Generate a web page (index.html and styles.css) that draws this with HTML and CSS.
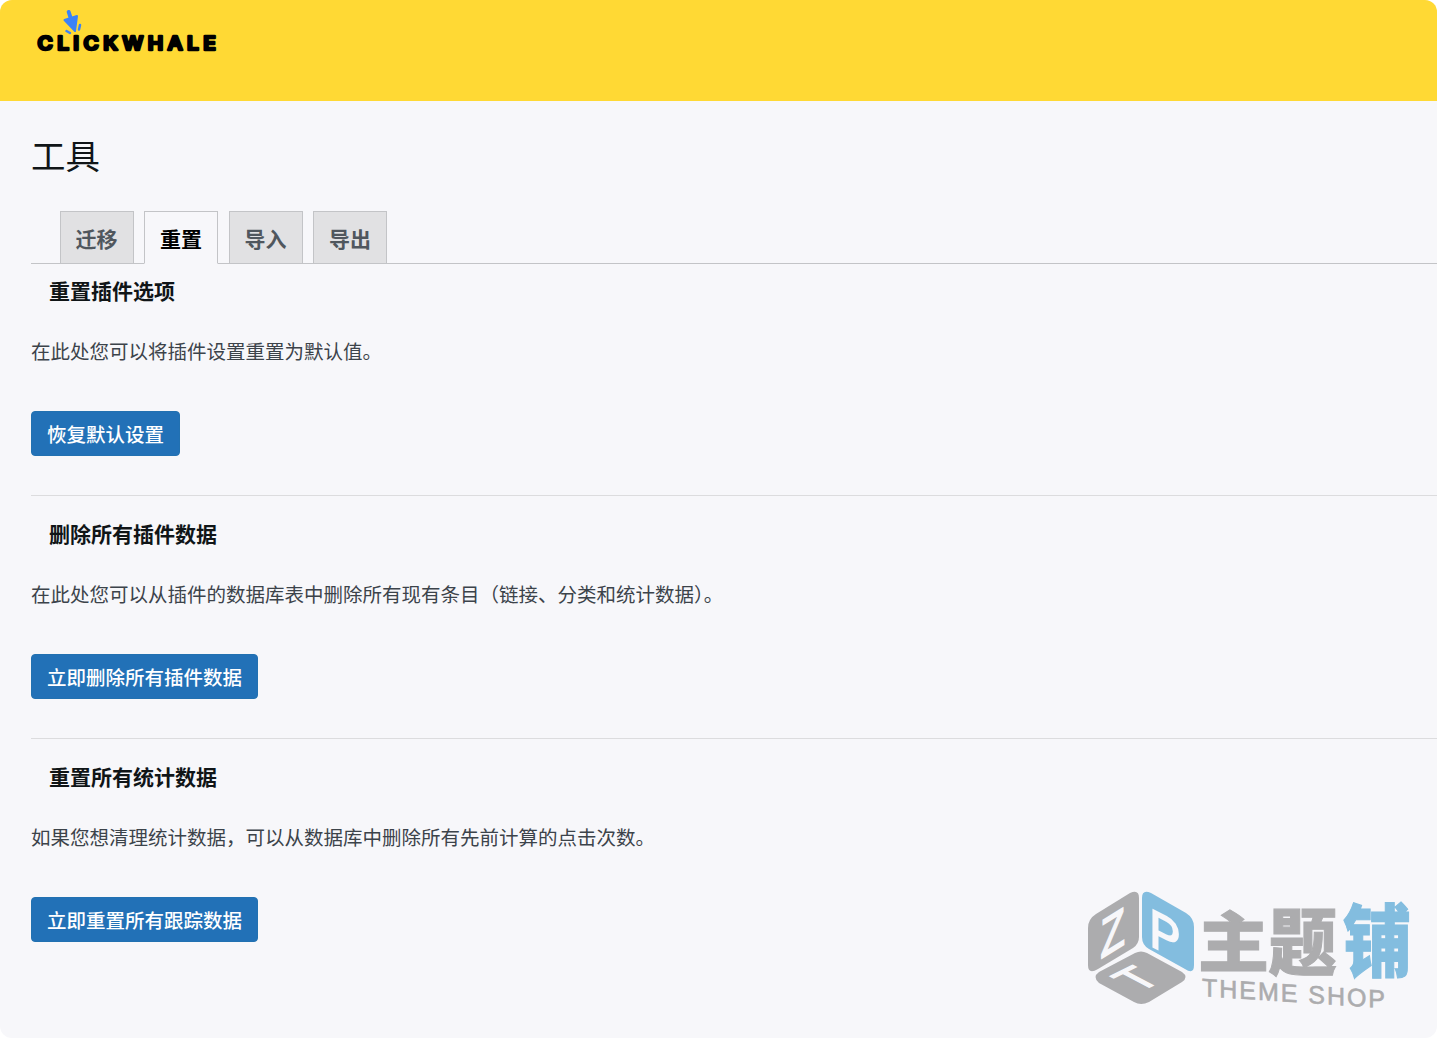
FILE: index.html
```html
<!DOCTYPE html>
<html lang="zh-CN">
<head>
    <meta charset="UTF-8">
    <meta name="viewport" content="width=device-width, initial-scale=1.0">
    <title>工具 - ClickWhale</title>
    <link rel="stylesheet" href="styles.css">
</head>
<body>
    <div class="page">
        <header class="header">
            <svg class="logo" width="190" height="50" viewBox="0 0 190 50" role="img" aria-label="ClickWhale">
                <text class="logo-text" transform="matrix(1.150 0 0 1 3.500 42)" textLength="155">CLICKWHALE</text>
                <g class="logo-cursor">
                    <path class="cursor-head" d="M30.500 12 L43 8 L41 23 Z"/>
                    <path class="cursor-tail" d="M34.700 4 L37 11"/>
                    <path class="cursor-click" d="M32.500 23 L36 25 M46 17 L45 21.500"/>
                </g>
            </svg>
        </header>

        <main class="content">
            <h1>工具</h1>

            <nav class="tabs">
                <a class="tab" href="#">迁移</a>
                <a class="tab active" href="#">重置</a>
                <a class="tab" href="#">导入</a>
                <a class="tab" href="#">导出</a>
            </nav>

            <section class="section">
                <h2>重置插件选项</h2>
                <p>在此处您可以将插件设置重置为默认值。</p>
                <button type="button" class="button">恢复默认设置</button>
            </section>

            <section class="section">
                <h2>删除所有插件数据</h2>
                <p>在此处您可以从插件的数据库表中删除所有现有条目（链接、分类和统计数据）。</p>
                <button type="button" class="button">立即删除所有插件数据</button>
            </section>

            <section class="section">
                <h2>重置所有统计数据</h2>
                <p>如果您想清理统计数据，可以从数据库中删除所有先前计算的点击次数。</p>
                <button type="button" class="button">立即重置所有跟踪数据</button>
            </section>
        </main>

        <!-- Theme Shop mark -->
        <svg class="watermark" width="350" height="150" viewBox="0 -20 350 150" role="img" aria-label="主题铺 THEME SHOP">
            <path class="gray" d="M50 8 Q59 4 59 13 V52 Q59 59 53 63 L18 84 Q8 90 8 80 V43 Q8 34 16 29 Z"/>
            <path class="blue" d="M62 13 Q62 4 71 8 L106 28 Q114 33 114 42 V80 Q114 90 105 84 L69 64 Q62 60 62 52 Z"/>
            <path class="gray" d="M55 68 Q61 65 67 68 L102 87 Q109 92 102 97 L69 117 Q61 121 54 117 L19 98 Q12 92 19 87 Z"/>
            <text class="face" transform="matrix(.93 -.58 0 1.25 20.500 74)">Z</text>
            <text class="face" transform="matrix(1.080 .56 0 1.250 69.500 60)">P</text>
            <text class="face" transform="matrix(.92 -.46 1 .53 59 107.500)">T</text>
            <text class="name gray" transform="matrix(1.060 0 0 .97 118 81)">主</text>
            <text class="name gray" transform="matrix(1.020 0 0 1.080 188.500 84)">题</text>
            <text class="name blue" transform="matrix(1.020 0 0 1.180 263 85.500)">铺</text>
            <text class="sub gray" transform="matrix(1 .066 0 1 122 111)" textLength="183">THEME SHOP</text>
        </svg>
    </div>
</body>
</html>
```

FILE: styles.css
```css
* {
    box-sizing: border-box;
}

body {
    margin: 0;
    background-color: #fff;
    color: #3c434a;
    font-family: "Noto Sans CJK SC", sans-serif;
    font-size: 19.5px;
}

.page {
    position: relative;
    height: 1038px;
    background-color: #f7f7fa;
    border-radius: 12px;
    overflow: hidden;
}

.header {
    height: 101px;
    padding: 8px 34px;
    background-color: #ffd934;
}

.logo {
    display: block;
}

.logo-text {
    font-family: Inter, sans-serif;
    font-size: 18px;
    font-weight: 600;
    fill: #000;
    stroke: #000;
    stroke-width: 2.4;
    stroke-linejoin: round;
}

.cursor-head {
    fill: #3b82f6;
    stroke: #3b82f6;
    stroke-width: 2;
    stroke-linejoin: round;
}

.cursor-tail,
.cursor-click {
    fill: none;
    stroke: #3b82f6;
    stroke-width: 4;
    stroke-linecap: round;
}

.cursor-click {
    stroke-width: 2.5;
}

.content {
    padding: 27px 0 0 31px;
}

h1 {
    margin: 0;
    height: 83px;
    line-height: 52px;
    font-size: 34.5px;
    font-weight: 400;
    color: #101517;
}

.tabs {
    display: flex;
    gap: 10.5px;
    height: 53px;
    padding-left: 28.5px;
    border-bottom: 1px solid #c3c4c7;
}

.tab {
    height: 53px;
    padding: 8px 15px;
    border: 1px solid #c3c4c7;
    background-color: #e1e1e3;
    color: #50575e;
    font-size: 21px;
    font-weight: 700;
    line-height: 36px;
    text-decoration: none;
}

.tab.active {
    border-bottom-color: #f7f7fa;
    background-color: #f7f7fa;
    color: #000;
}

.section {
    height: 243px;
    padding-top: 22px;
    border-bottom: 1px solid #dcdcde;
}

.section:first-of-type {
    height: 232px;
    padding-top: 11px;
}

.section:last-child {
    border-bottom: none;
}

h2 {
    margin: 0 0 30px 18px;
    font-size: 21px;
    font-weight: 700;
    line-height: 31px;
    color: #101517;
}

.section p {
    margin: 0 0 46px;
    line-height: 29px;
}

.section .button {
    display: block;
    height: 45px;
    padding: 0 15px;
    border: 1px solid #2271b1;
    border-radius: 4px;
    background-color: #2271b7;
    color: #fff;
    font-family: inherit;
    font-size: 19.5px;
    font-weight: 500;
    line-height: 43px;
}

/* Watermark over the bottom right corner */
.watermark {
    position: absolute;
    right: 7px;
    bottom: 23px;
}

.gray {
    fill: #acacae;
}

.blue {
    fill: #83bddf;
}

.face {
    font-family: "Liberation Sans", sans-serif;
    font-size: 43px;
    fill: #f7f7fa;
    stroke: #f7f7fa;
    stroke-width: 1.5;
}

.name {
    font-size: 67px;
    font-weight: 900;
}

.name.gray {
    stroke: #acacae;
    stroke-width: 1;
}

.name.blue {
    stroke: #83bddf;
    stroke-width: 1;
}

.sub {
    font-family: "Liberation Sans", sans-serif;
    font-size: 25px;
    stroke: #acacae;
    stroke-width: .6;
}
```
